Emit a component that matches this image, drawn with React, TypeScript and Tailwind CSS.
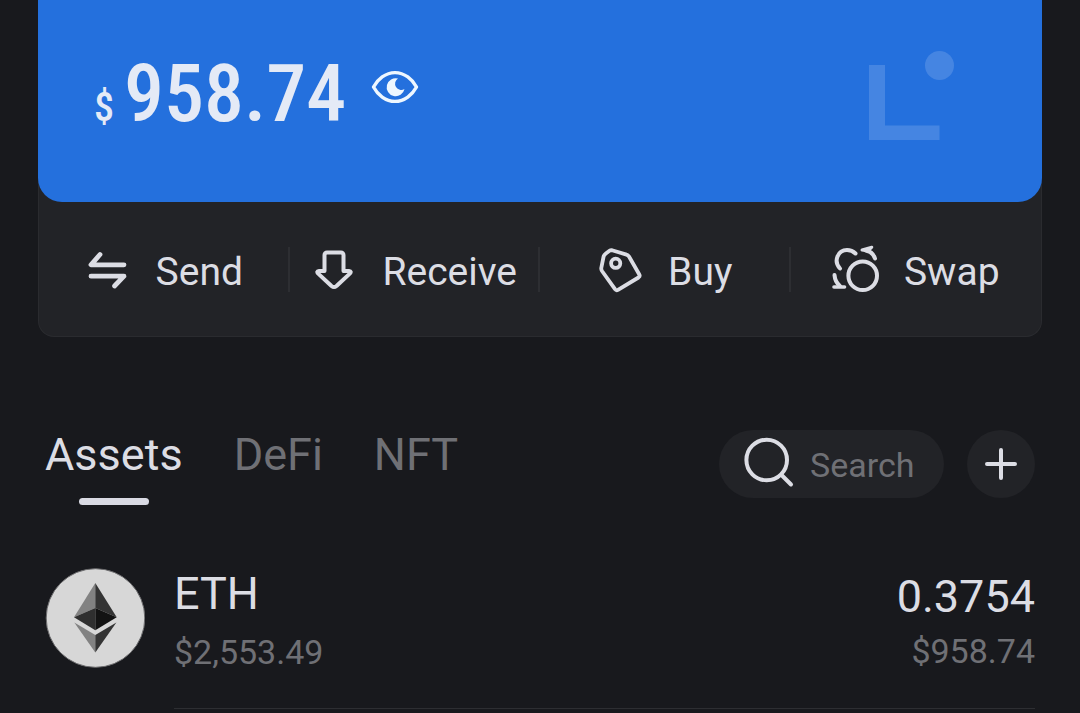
import React, { useState } from "react";

const SendIcon = () => (
    <svg viewBox="0 0 48 48" className="w-12 h-12 shrink-0" fill="none" stroke="currentColor" strokeWidth="4.8" strokeLinecap="round" strokeLinejoin="round">
        <path d="M16 8.500 L7 18.800 H40" />
        <path d="M7 30.200 H40 L30.500 40" />
    </svg>
);

const ReceiveIcon = () => (
    <svg viewBox="0 0 48 48" className="w-12 h-12 shrink-0" fill="none" stroke="currentColor" strokeWidth="4" strokeLinejoin="round">
        <path d="M17 6.500 H31 a2.500 2.500 0 0 1 2.500 2.500 V25 H39 q3 0.300 0.800 2.600 L26.500 40 q-2.500 2 -5 0 L8.200 27.600 q-2.200 -2.300 0.800 -2.600 H14.500 V9 A2.500 2.500 0 0 1 17 6.500 Z" />
    </svg>
);

const BuyIcon = () => (
    <svg viewBox="0 0 48 48" className="w-12 h-12 shrink-0" fill="none" stroke="currentColor" strokeWidth="3.8" strokeLinejoin="round">
        <path d="M16 4.200 L30.500 8.600 Q32 9 33 10.500 L43.300 28.500 Q44.300 30.300 42.500 31.500 L22 43.800 Q20.200 44.800 19 43.200 L6 25 Q5 23.500 5.300 21.800 L7.600 10.500 Q8 8.800 9.500 7.800 L13.500 4.800 Q14.600 4 16 4.200 Z" />
        <circle cx="19.700" cy="17.300" r="4.600" />
    </svg>
);

const SwapIcon = () => (
    <svg viewBox="0 0 48 48" className="w-12 h-12 shrink-0 overflow-visible" fill="none" stroke="currentColor" strokeWidth="4" strokeLinecap="round">
        <circle cx="30.700" cy="29.700" r="14.300" />
        <path d="M8 22.500 C1 15 6 4 15 4 Q20 4 23.500 7.500" />
        <path d="M30 4 L39.800 1.200 L36 5 Z" strokeWidth="3" strokeLinejoin="round" />
        <path d="M34 4.500 Q41 6 43 12.500" />
        <path d="M2.500 29 Q3 36 8 40" />
        <path d="M2 41 H12.500" strokeWidth="3.600" />
    </svg>
);

const EyeIcon = () => (
    <svg viewBox="0 0 48 34" className="w-12" fill="none">
        <path d="M2.500 17 C6.500 9.500 14.500 2.600 24 2.600 S41.500 9.500 45.500 17 C41.500 24.500 33.500 31.400 24 31.400 S6.500 24.500 2.500 17 Z" stroke="currentColor" strokeWidth="3.400" strokeLinejoin="round" />
        <path d="M27 8.500 A9 9 0 1 0 33.500 19 A5 5 0 0 1 27 8.500 Z" fill="currentColor" />
    </svg>
);

const EthLogo = () => (
    <svg viewBox="0 0 100 100" className="w-[100px] h-[100px] shrink-0">
        <circle cx="50.500" cy="50" r="49.300" fill="#d7d7d7" stroke="#6b6b6d" strokeWidth="1" />
        <path d="M50.300 15 L29 49.300 L50.300 40 Z" fill="#828282" />
        <path d="M50.300 15 L71.700 49.300 L50.300 40 Z" fill="#343434" />
        <path d="M29 49.300 L50.300 40 V62.300 Z" fill="#2f2f2f" />
        <path d="M71.700 49.300 L50.300 40 V62.300 Z" fill="#131313" />
        <path d="M29.300 54.500 L50.300 67 V84.500 Z" fill="#828282" />
        <path d="M71.400 54.500 L50.300 67 V84.500 Z" fill="#343434" />
    </svg>
);

const actions = [
    { label: "Send", Icon: SendIcon },
    { label: "Receive", Icon: ReceiveIcon },
    { label: "Buy", Icon: BuyIcon },
    { label: "Swap", Icon: SwapIcon },
];

const tabs = ["Assets", "DeFi", "NFT"];

const App: React.FC = () => {
    const [activeTab, setActiveTab] = useState("Assets");
    const [hidden, setHidden] = useState(false);

    return (
        <div className="min-h-screen bg-[#18191d] text-[#dcdde4] font-['Roboto',sans-serif]">
            <section className="mx-[38px] bg-[#222327] border border-t-0 border-[#2a2b2f] rounded-b-2xl">
                <div className="-mx-px flex justify-between items-start bg-[#2470dd] rounded-b-3xl pl-14 pr-[87px] pt-[54px] pb-[62px]">
                    <div className="flex items-start gap-[25px]">
                        <p className="flex items-baseline gap-2.5 font-['Roboto_Condensed','Roboto',sans-serif] font-medium text-[#e4eaf6]">
                            <span className="text-[40px] leading-none">$</span>
                            <span className="text-[80px] leading-[80px]">{hidden ? "****" : "958.74"}</span>
                        </p>
                        <button onClick={() => setHidden(!hidden)} aria-label="Toggle balance" className="mt-4 text-[#eef7ff]"><EyeIcon /></button>
                    </div>
                    <svg viewBox="0 0 86 90" className="w-[86px] h-[90px] -mt-1" fill="#4585e2">
                        <path d="M0 15 H16 V75.500 H70.500 V90 H0 Z" />
                        <circle cx="70.500" cy="15.500" r="14.500" />
                    </svg>
                </div>
                <div className="grid grid-cols-4 h-[134px] items-center divide-x-2 divide-[#2d2e32]">
                    {actions.map(({ label, Icon }) => (
                        <button key={label} className="h-[45px] pt-0.5 flex items-center justify-center gap-6 text-[39px]">
                            <Icon />
                            <span className="pt-1">{label}</span>
                        </button>
                    ))}
                </div>
            </section>

            <section className="px-[45px] pt-[93px]">
                <div className="flex justify-between items-start">
                    <nav className="flex gap-[51px]">
                        {tabs.map((tab) => (
                            <button key={tab} onClick={() => setActiveTab(tab)} className={`flex flex-col items-center gap-[18px] text-[45px] leading-[50px] ${tab === activeTab ? "text-[#dcdde4]" : "text-[#6f7075]"}`}>
                                {tab}
                                {tab === activeTab && <span className="w-[70px] h-[7px] rounded-full bg-[#d9dae3]" />}
                            </button>
                        ))}
                    </nav>
                    <div className="flex gap-[23px]">
                        <label className="flex items-center w-[225px] h-[68px] pl-6 pr-5 gap-[15px] rounded-full bg-[#222327]">
                            <svg viewBox="0 0 52 52" className="w-[52px] h-[52px] shrink-0 overflow-visible" fill="none" stroke="currentColor" strokeWidth="4" strokeLinecap="round">
                                <circle cx="23.700" cy="22" r="20.300" />
                                <path d="M38.500 37 L48 46.500" />
                            </svg>
                            <input type="text" aria-label="Search" placeholder="Search" className="w-full min-w-0 pt-0.5 bg-transparent outline-none text-[34px] placeholder:text-[#6f7075]" />
                        </label>
                        <button aria-label="Add asset" className="w-[68px] h-[68px] flex items-center justify-center rounded-full bg-[#222327]">
                            <svg viewBox="0 0 34 34" className="w-[34px] h-[34px]" stroke="currentColor" strokeWidth="4" strokeLinecap="round">
                                <path d="M17 3 V31 M3 17 H31" />
                            </svg>
                        </button>
                    </div>
                </div>

                <div className="flex items-start gap-[29px] pt-[54px]">
                    <div className="pt-[9px]"><EthLogo /></div>
                    <div className="flex-1 flex justify-between border-b border-[#2d2e32] pb-[29px]">
                        <div className="flex flex-col gap-1 pt-2">
                            <p className="text-[45px] leading-[54px]">ETH</p>
                            <p className="text-[34px] leading-[54px] text-[#6f7075]">$2,553.49</p>
                        </div>
                        <div className="text-right pt-[11px]">
                            <p className="text-[45px] leading-[54px]">0.3754</p>
                            <p className="text-[34px] leading-[54px] text-[#6f7075]">$958.74</p>
                        </div>
                    </div>
                </div>
            </section>
        </div>
    );
};

export default App;
